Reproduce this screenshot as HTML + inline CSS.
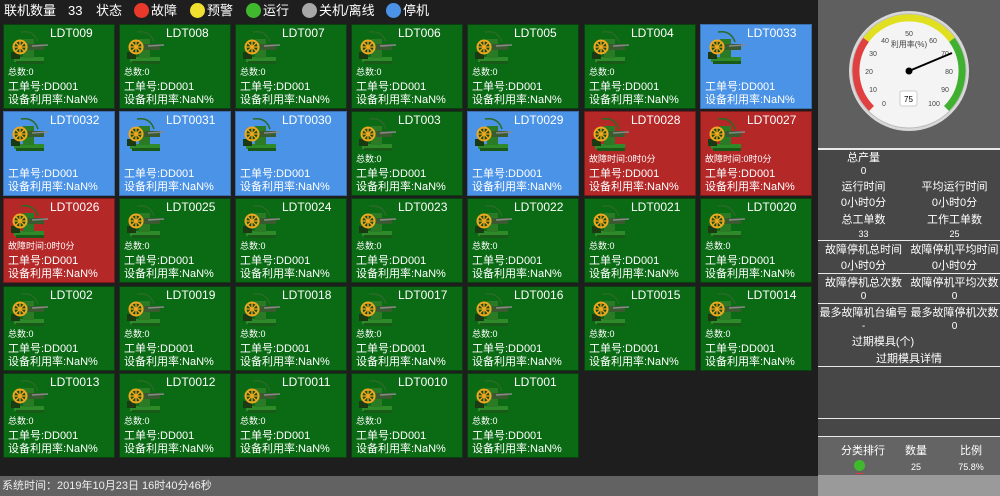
<!DOCTYPE html>
<html><head><meta charset="utf-8">
<style>
*{margin:0;padding:0;box-sizing:border-box}
body{width:1000px;height:496px;background:#1e1e1e;position:relative;overflow:hidden;font-family:"Liberation Sans","Noto Sans CJK SC",sans-serif;color:#fff}
.top{position:absolute;left:0;top:0;height:22px;width:818px;font-size:13px;line-height:22px}
.top span{position:absolute;top:0}
.dot{display:inline-block;width:15px;height:15px;border-radius:50%;position:absolute;top:3px}
.c{position:absolute;width:112px;height:85px;border:1px solid #0c3f10;font-size:10px;line-height:12px}
.g{background:#0a6b14}
.b{background:#4b93e6;border-color:#3a70b0}
.r{background:#b52828;border-color:#7a1a1a}
.c .t{position:absolute;left:46px;top:1px;font-size:12px;line-height:14px}
.c svg{position:absolute;left:4px;top:5px}
.c .l{position:absolute;left:4px;white-space:nowrap;line-height:12px}
.l1{top:41px;font-size:9px}
.l2{top:56px;font-size:11px}
.l3{top:69px;font-size:11px}
.side{position:absolute;left:818px;top:0;width:182px;height:496px;background:#474747}
.gz{position:absolute;left:0;top:0;width:182px;height:148px;background:#5f5f5f}
.hl{position:absolute;left:0;width:182px;height:2px;background:#e8e8e8}
.s{position:absolute;font-size:11px;line-height:14px;text-align:center;width:91px;white-space:nowrap}
.sb{position:absolute;left:0;top:476px;width:818px;height:20px;background:#626262;font-size:11px;line-height:20px;padding-left:2px;color:#eee}
</style></head><body>
<svg width="0" height="0" style="position:absolute"><defs>
<symbol id="m" viewBox="0 0 40 36">
<rect x="6" y="27" width="30" height="5" fill="#2f8a2a"/>
<rect x="8" y="31" width="28" height="3" fill="#1a5a18"/>
<rect x="15" y="9" width="11" height="19" fill="#2a7a26"/>
<rect x="20" y="14" width="16" height="6" fill="#3a5a30"/>
<line x1="24" y1="16" x2="40" y2="15" stroke="#888" stroke-width="1.5"/>
<path d="M13 2 Q26 0 30 12" stroke="#2a6a26" stroke-width="1.5" fill="none"/>
<rect x="3" y="22" width="9" height="7" fill="#1a3a14"/>
<circle cx="12" cy="17" r="7.5" fill="#f0a820"/>
<circle cx="12" cy="17" r="5.5" fill="#1a4a10"/>
<path d="M6.5 17h11M12 11.5v11M8 13l8 8M16 13l-8 8" stroke="#f0a820" stroke-width="1.3"/>
</symbol></defs></svg>

<div class="top">
<span style="left:4px">联机数量</span><span style="left:68px">33</span><span style="left:96px">状态</span>
<i class="dot" style="left:134px;background:#e8392b"></i><span style="left:151px">故障</span>
<i class="dot" style="left:190px;background:#f0e030"></i><span style="left:207px">预警</span>
<i class="dot" style="left:246px;background:#3fb82d"></i><span style="left:263px">运行</span>
<i class="dot" style="left:302px;background:#a8a8a8"></i><span style="left:319px">关机/离线</span>
<i class="dot" style="left:386px;background:#4b93e6"></i><span style="left:403px">停机</span>
</div>

<!-- Row 1 -->
<div class="c g" style="left:3px;top:24px"><div class="t">LDT009</div><svg width="40" height="36"><use href="#m"/></svg><div class="l l1">总数:0</div><div class="l l2">工单号:DD001</div><div class="l l3">设备利用率:NaN%</div></div>
<div class="c g" style="left:119px;top:24px"><div class="t">LDT008</div><svg width="40" height="36"><use href="#m"/></svg><div class="l l1">总数:0</div><div class="l l2">工单号:DD001</div><div class="l l3">设备利用率:NaN%</div></div>
<div class="c g" style="left:235px;top:24px"><div class="t">LDT007</div><svg width="40" height="36"><use href="#m"/></svg><div class="l l1">总数:0</div><div class="l l2">工单号:DD001</div><div class="l l3">设备利用率:NaN%</div></div>
<div class="c g" style="left:351px;top:24px"><div class="t">LDT006</div><svg width="40" height="36"><use href="#m"/></svg><div class="l l1">总数:0</div><div class="l l2">工单号:DD001</div><div class="l l3">设备利用率:NaN%</div></div>
<div class="c g" style="left:467px;top:24px"><div class="t">LDT005</div><svg width="40" height="36"><use href="#m"/></svg><div class="l l1">总数:0</div><div class="l l2">工单号:DD001</div><div class="l l3">设备利用率:NaN%</div></div>
<div class="c g" style="left:584px;top:24px"><div class="t">LDT004</div><svg width="40" height="36"><use href="#m"/></svg><div class="l l1">总数:0</div><div class="l l2">工单号:DD001</div><div class="l l3">设备利用率:NaN%</div></div>
<div class="c b" style="left:700px;top:24px"><div class="t">LDT0033</div><svg width="40" height="36"><use href="#m"/></svg><div class="l l2">工单号:DD001</div><div class="l l3">设备利用率:NaN%</div></div>
<!-- Row 2 -->
<div class="c b" style="left:3px;top:111px"><div class="t">LDT0032</div><svg width="40" height="36"><use href="#m"/></svg><div class="l l2">工单号:DD001</div><div class="l l3">设备利用率:NaN%</div></div>
<div class="c b" style="left:119px;top:111px"><div class="t">LDT0031</div><svg width="40" height="36"><use href="#m"/></svg><div class="l l2">工单号:DD001</div><div class="l l3">设备利用率:NaN%</div></div>
<div class="c b" style="left:235px;top:111px"><div class="t">LDT0030</div><svg width="40" height="36"><use href="#m"/></svg><div class="l l2">工单号:DD001</div><div class="l l3">设备利用率:NaN%</div></div>
<div class="c g" style="left:351px;top:111px"><div class="t">LDT003</div><svg width="40" height="36"><use href="#m"/></svg><div class="l l1">总数:0</div><div class="l l2">工单号:DD001</div><div class="l l3">设备利用率:NaN%</div></div>
<div class="c b" style="left:467px;top:111px"><div class="t">LDT0029</div><svg width="40" height="36"><use href="#m"/></svg><div class="l l2">工单号:DD001</div><div class="l l3">设备利用率:NaN%</div></div>
<div class="c r" style="left:584px;top:111px"><div class="t">LDT0028</div><svg width="40" height="36"><use href="#m"/></svg><div class="l l1">故障时间:0时0分</div><div class="l l2">工单号:DD001</div><div class="l l3">设备利用率:NaN%</div></div>
<div class="c r" style="left:700px;top:111px"><div class="t">LDT0027</div><svg width="40" height="36"><use href="#m"/></svg><div class="l l1">故障时间:0时0分</div><div class="l l2">工单号:DD001</div><div class="l l3">设备利用率:NaN%</div></div>
<!-- Row 3 -->
<div class="c r" style="left:3px;top:198px"><div class="t">LDT0026</div><svg width="40" height="36"><use href="#m"/></svg><div class="l l1">故障时间:0时0分</div><div class="l l2">工单号:DD001</div><div class="l l3">设备利用率:NaN%</div></div>
<div class="c g" style="left:119px;top:198px"><div class="t">LDT0025</div><svg width="40" height="36"><use href="#m"/></svg><div class="l l1">总数:0</div><div class="l l2">工单号:DD001</div><div class="l l3">设备利用率:NaN%</div></div>
<div class="c g" style="left:235px;top:198px"><div class="t">LDT0024</div><svg width="40" height="36"><use href="#m"/></svg><div class="l l1">总数:0</div><div class="l l2">工单号:DD001</div><div class="l l3">设备利用率:NaN%</div></div>
<div class="c g" style="left:351px;top:198px"><div class="t">LDT0023</div><svg width="40" height="36"><use href="#m"/></svg><div class="l l1">总数:0</div><div class="l l2">工单号:DD001</div><div class="l l3">设备利用率:NaN%</div></div>
<div class="c g" style="left:467px;top:198px"><div class="t">LDT0022</div><svg width="40" height="36"><use href="#m"/></svg><div class="l l1">总数:0</div><div class="l l2">工单号:DD001</div><div class="l l3">设备利用率:NaN%</div></div>
<div class="c g" style="left:584px;top:198px"><div class="t">LDT0021</div><svg width="40" height="36"><use href="#m"/></svg><div class="l l1">总数:0</div><div class="l l2">工单号:DD001</div><div class="l l3">设备利用率:NaN%</div></div>
<div class="c g" style="left:700px;top:198px"><div class="t">LDT0020</div><svg width="40" height="36"><use href="#m"/></svg><div class="l l1">总数:0</div><div class="l l2">工单号:DD001</div><div class="l l3">设备利用率:NaN%</div></div>
<!-- Row 4 -->
<div class="c g" style="left:3px;top:286px"><div class="t">LDT002</div><svg width="40" height="36"><use href="#m"/></svg><div class="l l1">总数:0</div><div class="l l2">工单号:DD001</div><div class="l l3">设备利用率:NaN%</div></div>
<div class="c g" style="left:119px;top:286px"><div class="t">LDT0019</div><svg width="40" height="36"><use href="#m"/></svg><div class="l l1">总数:0</div><div class="l l2">工单号:DD001</div><div class="l l3">设备利用率:NaN%</div></div>
<div class="c g" style="left:235px;top:286px"><div class="t">LDT0018</div><svg width="40" height="36"><use href="#m"/></svg><div class="l l1">总数:0</div><div class="l l2">工单号:DD001</div><div class="l l3">设备利用率:NaN%</div></div>
<div class="c g" style="left:351px;top:286px"><div class="t">LDT0017</div><svg width="40" height="36"><use href="#m"/></svg><div class="l l1">总数:0</div><div class="l l2">工单号:DD001</div><div class="l l3">设备利用率:NaN%</div></div>
<div class="c g" style="left:467px;top:286px"><div class="t">LDT0016</div><svg width="40" height="36"><use href="#m"/></svg><div class="l l1">总数:0</div><div class="l l2">工单号:DD001</div><div class="l l3">设备利用率:NaN%</div></div>
<div class="c g" style="left:584px;top:286px"><div class="t">LDT0015</div><svg width="40" height="36"><use href="#m"/></svg><div class="l l1">总数:0</div><div class="l l2">工单号:DD001</div><div class="l l3">设备利用率:NaN%</div></div>
<div class="c g" style="left:700px;top:286px"><div class="t">LDT0014</div><svg width="40" height="36"><use href="#m"/></svg><div class="l l1">总数:0</div><div class="l l2">工单号:DD001</div><div class="l l3">设备利用率:NaN%</div></div>
<!-- Row 5 -->
<div class="c g" style="left:3px;top:373px"><div class="t">LDT0013</div><svg width="40" height="36"><use href="#m"/></svg><div class="l l1">总数:0</div><div class="l l2">工单号:DD001</div><div class="l l3">设备利用率:NaN%</div></div>
<div class="c g" style="left:119px;top:373px"><div class="t">LDT0012</div><svg width="40" height="36"><use href="#m"/></svg><div class="l l1">总数:0</div><div class="l l2">工单号:DD001</div><div class="l l3">设备利用率:NaN%</div></div>
<div class="c g" style="left:235px;top:373px"><div class="t">LDT0011</div><svg width="40" height="36"><use href="#m"/></svg><div class="l l1">总数:0</div><div class="l l2">工单号:DD001</div><div class="l l3">设备利用率:NaN%</div></div>
<div class="c g" style="left:351px;top:373px"><div class="t">LDT0010</div><svg width="40" height="36"><use href="#m"/></svg><div class="l l1">总数:0</div><div class="l l2">工单号:DD001</div><div class="l l3">设备利用率:NaN%</div></div>
<div class="c g" style="left:467px;top:373px"><div class="t">LDT001</div><svg width="40" height="36"><use href="#m"/></svg><div class="l l1">总数:0</div><div class="l l2">工单号:DD001</div><div class="l l3">设备利用率:NaN%</div></div>

<div class="sb">系统时间：2019年10月23日 16时40分46秒</div>

<div class="side">
<div class="gz">
<svg width="124" height="124" style="position:absolute;left:29px;top:9px" viewBox="-2 -2 124 124">
<circle cx="60" cy="60" r="60" fill="#d8d8d8"/>
<circle cx="60" cy="60" r="57" fill="#f4f4f4" stroke="#bbb" stroke-width="1"/>
<path d="M22.5 97.5 A53 53 0 0 1 17.1 28.8" stroke="#e04040" stroke-width="7" fill="none"/>
<path d="M17.1 28.8 A53 53 0 0 1 102.9 28.8" stroke="#e0e020" stroke-width="7" fill="none"/>
<path d="M102.9 28.8 A53 53 0 0 1 97.5 97.5" stroke="#40b030" stroke-width="7" fill="none"/>
<g font-size="7" fill="#444" text-anchor="middle" font-family="Liberation Sans">
<text x="35" y="95">0</text><text x="24" y="81">10</text><text x="20" y="63">20</text><text x="24" y="45">30</text><text x="36" y="32">40</text><text x="60" y="25">50</text><text x="84" y="32">60</text><text x="96" y="45">70</text><text x="100" y="63">80</text><text x="96" y="81">90</text><text x="85" y="95">100</text>
<text x="60" y="36" font-size="8" font-family="Liberation Sans,Noto Sans CJK SC,sans-serif">利用率(%)</text>
</g>
<rect x="51" y="80" width="17" height="15" rx="2" fill="#fff" stroke="#ccc"/>
<text x="59.5" y="91" font-size="8" text-anchor="middle" fill="#000" font-family="Liberation Sans">75</text>
<line x1="60" y1="60" x2="103" y2="42" stroke="#000" stroke-width="2"/>
<circle cx="60" cy="60" r="3.5" fill="#000"/>
</svg>
</div>
<div class="hl" style="top:148px"></div>
<div class="s" style="left:0;top:151px">总产量</div>
<div class="s" style="left:0;top:165px;font-size:10px">0</div>
<div class="s" style="left:0;top:180px">运行时间</div><div class="s" style="left:91px;top:180px">平均运行时间</div>
<div class="s" style="left:0;top:196px">0小时0分</div><div class="s" style="left:91px;top:196px">0小时0分</div>
<div class="s" style="left:0;top:213px">总工单数</div><div class="s" style="left:91px;top:213px">工作工单数</div>
<div class="s" style="left:0;top:227px;font-size:9px">33</div><div class="s" style="left:91px;top:227px;font-size:9px">25</div>
<div class="hl" style="top:240px;height:1px"></div>
<div class="s" style="left:0;top:243px">故障停机总时间</div><div class="s" style="left:91px;top:243px">故障停机平均时间</div>
<div class="s" style="left:0;top:259px">0小时0分</div><div class="s" style="left:91px;top:259px">0小时0分</div>
<div class="hl" style="top:273px;height:1px"></div>
<div class="s" style="left:0;top:276px">故障停机总次数</div><div class="s" style="left:91px;top:276px">故障停机平均次数</div>
<div class="s" style="left:0;top:290px;font-size:10px">0</div><div class="s" style="left:91px;top:290px;font-size:10px">0</div>
<div class="hl" style="top:303px;height:1px"></div>
<div class="s" style="left:0;top:306px">最多故障机台编号</div><div class="s" style="left:91px;top:306px">最多故障停机次数</div>
<div class="s" style="left:0;top:320px;font-size:10px">-</div><div class="s" style="left:91px;top:320px;font-size:10px">0</div>
<div class="s" style="left:0;top:335px;width:130px">过期模具(个)</div>
<div class="s" style="left:0;top:352px;width:182px">过期模具详情</div>
<div class="hl" style="top:366px;height:1px"></div>
<div class="hl" style="top:418px;height:1px"></div>
<div class="hl" style="top:436px;height:1px"></div>
<div style="position:absolute;left:0;top:437px;width:182px;height:38px;background:#646464"></div>
<div style="position:absolute;left:0;top:475px;width:182px;height:21px;background:#9a9a9a"></div>
<div class="s" style="left:5px;top:444px;width:80px">分类排行</div>
<div class="s" style="left:73px;top:444px;width:50px">数量</div>
<div class="s" style="left:128px;top:444px;width:50px">比例</div>
<div style="position:absolute;left:36px;top:460px;width:11px;height:11px;border-radius:50%;background:#3fb82d"></div>
<div style="position:absolute;left:38px;top:473px;width:7px;height:1px;background:#e33"></div>
<div class="s" style="left:73px;top:460px;width:50px;font-size:9px">25</div>
<div class="s" style="left:128px;top:460px;width:50px;font-size:9px">75.8%</div>
</div>
</body></html>
